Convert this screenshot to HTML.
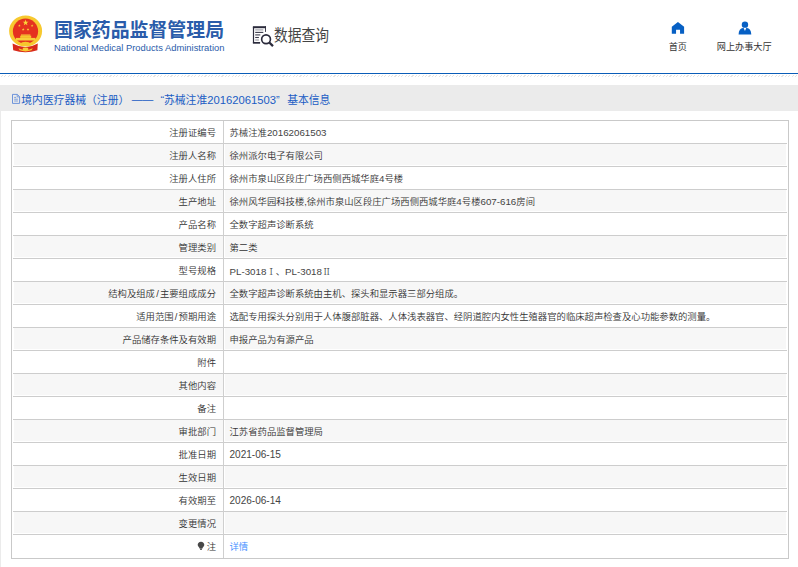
<!DOCTYPE html>
<html lang="zh-CN">
<head>
<meta charset="utf-8">
<title>国家药品监督管理局 数据查询</title>
<style>
html,body{margin:0;padding:0;}
body{width:798px;height:567px;overflow:hidden;background:#ebebeb;position:relative;
  font-family:"Liberation Sans","Noto Sans CJK SC",sans-serif;color:#333;}
.abs{position:absolute;}
#header{left:0;top:0;width:798px;height:85px;background:#fff;}
#blueline{left:0;top:72.6px;width:798px;height:1.6px;background:#0a5db8;}
#hatch{left:0;top:74.6px;width:798px;height:2.4px;
  background:repeating-linear-gradient(135deg,#fff 0,#fff 1.6px,#e4e4e4 1.6px,#e4e4e4 2.4px);}
#logo-cn{left:54px;top:17px;font-size:18.9px;line-height:28px;font-weight:bold;color:#2a5caa;white-space:nowrap;letter-spacing:0;}
#logo-en{left:54px;top:41.5px;font-size:9.4px;line-height:12px;color:#2a5caa;white-space:nowrap;}
#dq{left:273.6px;top:23.8px;font-size:15.8px;line-height:24px;color:#444;white-space:nowrap;transform:scaleX(0.87);transform-origin:0 0;}
.nav{font-size:9.15px;line-height:12px;color:#333;white-space:nowrap;text-align:center;}
#titlebar{left:0;top:85px;width:798px;height:26px;background:#ebebeb;}
#title{transform:translateY(0.5px);left:0;top:90.6px;font-size:10.8px;line-height:16px;color:#1a5cc4;white-space:nowrap;}
#title span{position:absolute;top:0;white-space:nowrap;}
#title b{font-weight:normal;font-size:11.26px;}
#panel{left:1px;top:111px;width:797px;height:456px;background:#fff;}
#tbl{left:11px;top:120px;width:778px;border:1px solid #c9c9c9;box-sizing:border-box;background:#fff;}
.row{height:23px;box-sizing:border-box;border-bottom:1px solid #cdcdcd;display:flex;font-size:9.36px;line-height:22px;margin:0 1px;font-weight:350;}
.row.last{border-bottom:none;line-height:23px;}
.t{display:block;transform:translateY(0.55px);}
.row.last .t{transform:translateY(1.1px);}
#vline{position:absolute;left:211px;top:0;bottom:0;width:1px;background:#cfcfcf;}
.row.alt .k,.row.alt .v{background:#f7f7f7;box-shadow:inset 1px 0 #fff,inset -1px 0 #fff,inset 0 -1px #fff;}
.k{width:211px;box-sizing:border-box;text-align:right;padding-right:8px;color:#333;white-space:nowrap;}
.v{flex:1;padding-left:5.5px;color:#333;white-space:nowrap;}
.n{font-size:9.75px;color:#444;}
.n.d{font-size:10.05px;}
.sl{padding:0 1.2px;}
.r{font-family:"Noto Serif CJK SC",serif;}
a{color:#3a8cff;text-decoration:none;}
</style>
</head>
<body>
<div id="header" class="abs"></div>
<div id="blueline" class="abs"></div>
<div id="hatch" class="abs"></div>

<svg class="abs" id="emblem" style="left:5px;top:10px;" width="45" height="48" viewBox="5 10 45 48">
<path d="M12.6 43.4 Q25.5 50.5 37.8 43.4 L37.4 50.3 Q25.5 54 13.2 50.3 Z" fill="#d92a1c"/>
<ellipse cx="25.6" cy="31" rx="16.5" ry="15.6" fill="#f7c92f"/>
<circle cx="25.5" cy="31.2" r="12.6" fill="#e5321f"/>
<polygon points="25.60,19.60 26.33,21.70 28.55,21.74 26.78,23.08 27.42,25.21 25.60,23.94 23.78,25.21 24.42,23.08 22.65,21.74 24.87,21.70" fill="#fbd63a"/>
<polygon points="19.40,24.30 19.73,25.25 20.73,25.27 19.93,25.87 20.22,26.83 19.40,26.26 18.58,26.83 18.87,25.87 18.07,25.27 19.07,25.25" fill="#fbd63a"/>
<polygon points="32.10,24.30 32.43,25.25 33.43,25.27 32.63,25.87 32.92,26.83 32.10,26.26 31.28,26.83 31.57,25.87 30.77,25.27 31.77,25.25" fill="#fbd63a"/>
<polygon points="23.20,28.10 23.53,29.05 24.53,29.07 23.73,29.67 24.02,30.63 23.20,30.06 22.38,30.63 22.67,29.67 21.87,29.07 22.87,29.05" fill="#fbd63a"/>
<polygon points="28.00,28.10 28.33,29.05 29.33,29.07 28.53,29.67 28.82,30.63 28.00,30.06 27.18,30.63 27.47,29.67 26.67,29.07 27.67,29.05" fill="#fbd63a"/>
<rect x="21" y="34.5" width="9.4" height="1.2" fill="#f8cf3a"/>
<rect x="20.2" y="35.7" width="11" height="2.2" fill="#f6c62d"/>
<rect x="16" y="37.9" width="19.4" height="2.6" fill="#f8cf3a"/>
<ellipse cx="25.5" cy="43.6" rx="4.4" ry="1.8" fill="#f6c62d"/>
<path d="M18.4 48.3 Q25.5 51.8 32.8 48.3 L31.6 50.3 Q25.5 52.5 19.6 50.3 Z" fill="#f6c62d"/>
<ellipse cx="25.5" cy="49" rx="3" ry="1.4" fill="#f8cf3a"/>
</svg>
<svg class="abs" id="dqicon" style="left:250px;top:23px;" width="28" height="26" viewBox="250 23 28 26">
<path d="M253.5 27 V43" stroke="#2b2b3c" stroke-width="1.2"/>
<rect x="252.9" y="26.2" width="13" height="2" fill="#2b2b3c"/>
<rect x="265" y="26.2" width="0.9" height="5.7" fill="#2b2b3c"/>
<rect x="252.9" y="42" width="7.2" height="1.7" fill="#2b2b3c"/>
<path d="M255.2 29.9 H263.3" stroke="#a4a4ac" stroke-width="1.2"/>
<path d="M255.2 32.4 H263.3" stroke="#3a3a4a" stroke-width="1.1"/>
<path d="M255.2 34.9 H260.3" stroke="#5c5c6a" stroke-width="1.3"/>
<path d="M255.2 37.5 H258.9" stroke="#3a3a4a" stroke-width="1.1"/>
<path d="M255.2 40 H258.9" stroke="#a4a4ac" stroke-width="1.3"/>
<circle cx="266.05" cy="39.25" r="4.4" fill="#fff" stroke="#2b2b3c" stroke-width="1.65"/>
<path d="M269.3 42.5 L273 46.1" stroke="#2b2b3c" stroke-width="2.3"/>
</svg>
<svg class="abs" style="left:670px;top:20px;" width="16" height="15" viewBox="670 20 16 15">
<path d="M677.95 21.9 L684.1 26.8 V33.8 H680.05 V29.75 H676.05 V33.8 H671.8 V26.8 Z" fill="#0760c4"/>
</svg>
<svg class="abs" style="left:736px;top:19px;" width="18" height="17" viewBox="736 19 18 17">
<circle cx="744.95" cy="24.67" r="3.2" fill="#0760c4"/>
<path d="M738.6 34.6 C738.6 30.6 740.6 28.4 742.9 28.1 H743.6 L744.95 30.9 L746.3 28.1 H747 C749.3 28.4 751.3 30.6 751.3 34.6 Z" fill="#0760c4"/>
</svg>
<div id="logo-cn" class="abs">国家药品监督管理局</div>
<div id="logo-en" class="abs">National Medical Products Administration</div>
<div id="dq" class="abs">数据查询</div>
<div class="abs nav" style="left:657.8px;top:41.2px;width:40px;">首页</div>
<div class="abs nav" style="left:704.2px;top:41.2px;width:80px;">网上办事大厅</div>

<div id="titlebar" class="abs"></div>
<svg class="abs" style="left:11px;top:93px;" width="10" height="12" viewBox="11 93 10 12">
<path d="M12.5 94.4 H17.3 L19.6 96.7 V103.4 H12.5 Z" fill="none" stroke="#5f8ad8" stroke-width="0.9"/>
<path d="M17.2 94.5 V96.9 H19.5" fill="none" stroke="#5f8ad8" stroke-width="0.8"/>
<path d="M14.2 97.4 H16.2 M14.2 99.2 H17.9 M14.2 101 H17.9" stroke="#5f8ad8" stroke-width="0.8"/>
</svg>
<div id="title" class="abs"><span style="left:21.3px">境内医疗器械（注册）</span><span style="left:131.8px;top:-1px">——</span><span style="left:160.4px">“苏械注准<b>20162061503</b>”</span><span style="left:287.2px">基本信息</span></div>
<div id="panel" class="abs"></div>

<div id="tbl" class="abs">
<div class="row"><div class="k"><span class="t">注册证编号</span></div><div class="v"><span class="t">苏械注准<span class="n">20162061503</span></span></div></div>
<div class="row alt"><div class="k"><span class="t">注册人名称</span></div><div class="v"><span class="t">徐州派尔电子有限公司</span></div></div>
<div class="row"><div class="k"><span class="t">注册人住所</span></div><div class="v"><span class="t">徐州市泉山区段庄广场西侧西城华庭<span class="n">4</span>号楼</span></div></div>
<div class="row alt"><div class="k"><span class="t">生产地址</span></div><div class="v"><span class="t">徐州风华园科技楼,徐州市泉山区段庄广场西侧西城华庭<span class="n">4</span>号楼<span class="n">607-616</span>房间</span></div></div>
<div class="row"><div class="k"><span class="t">产品名称</span></div><div class="v"><span class="t">全数字超声诊断系统</span></div></div>
<div class="row alt"><div class="k"><span class="t">管理类别</span></div><div class="v"><span class="t">第二类</span></div></div>
<div class="row"><div class="k"><span class="t">型号规格</span></div><div class="v"><span class="t"><span class="n">PL-3018</span><span class="r">Ⅰ</span>、<span class="n">PL-3018</span><span class="r">Ⅱ</span></span></div></div>
<div class="row alt"><div class="k"><span class="t">结构及组成<span class="sl">/</span>主要组成成分</span></div><div class="v"><span class="t">全数字超声诊断系统由主机、探头和显示器三部分组成。</span></div></div>
<div class="row"><div class="k"><span class="t">适用范围<span class="sl">/</span>预期用途</span></div><div class="v"><span class="t">选配专用探头分别用于人体腹部脏器、人体浅表器官、经阴道腔内女性生殖器官的临床超声检查及心功能参数的测量。</span></div></div>
<div class="row alt"><div class="k"><span class="t">产品储存条件及有效期</span></div><div class="v"><span class="t">申报产品为有源产品</span></div></div>
<div class="row"><div class="k"><span class="t">附件</span></div><div class="v"><span class="t"></span></div></div>
<div class="row alt"><div class="k"><span class="t">其他内容</span></div><div class="v"><span class="t"></span></div></div>
<div class="row"><div class="k"><span class="t">备注</span></div><div class="v"><span class="t"></span></div></div>
<div class="row alt"><div class="k"><span class="t">审批部门</span></div><div class="v"><span class="t">江苏省药品监督管理局</span></div></div>
<div class="row"><div class="k"><span class="t">批准日期</span></div><div class="v"><span class="t"><span class="n d">2021-06-15</span></span></div></div>
<div class="row alt"><div class="k"><span class="t">生效日期</span></div><div class="v"><span class="t"></span></div></div>
<div class="row"><div class="k"><span class="t">有效期至</span></div><div class="v"><span class="t"><span class="n d">2026-06-14</span></span></div></div>
<div class="row alt"><div class="k"><span class="t">变更情况</span></div><div class="v"><span class="t"></span></div></div>
<div class="row last"><div class="k"><span class="t"><svg width="8" height="10" viewBox="0 0 8 10" style="vertical-align:-1.2px;margin-right:1.2px"><path d="M4 0.6 C6 0.6 7.3 2 7.3 3.7 C7.3 5.4 5.6 6.3 5.2 7.6 H2.8 C2.4 6.3 0.7 5.4 0.7 3.7 C0.7 2 2 0.6 4 0.6 Z" fill="#474747"/><rect x="3" y="7.9" width="2" height="1" fill="#666"/></svg>注</span></div><div class="v"><span class="t"><a>详情</a></span></div></div>
<div id="vline"></div>
</div>
</body>
</html>
